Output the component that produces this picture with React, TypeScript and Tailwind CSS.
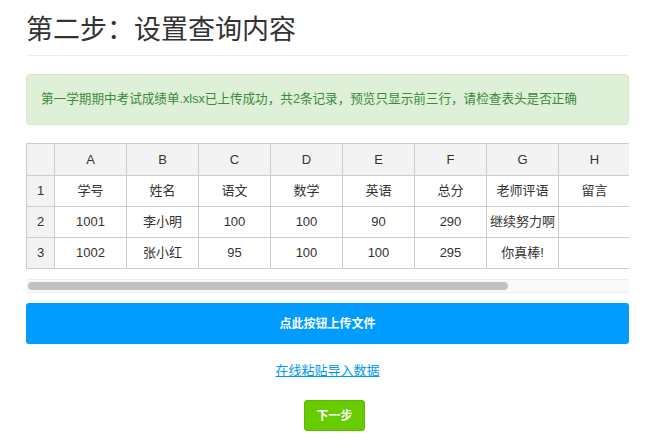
const cols = ['A', 'B', 'C', 'D', 'E', 'F', 'G', 'H']

const rows = [
  ['学号', '姓名', '语文', '数学', '英语', '总分', '老师评语', '留言'],
  ['1001', '李小明', '100', '100', '90', '290', '继续努力啊', ''],
  ['1002', '张小红', '95', '100', '100', '295', '你真棒!', ''],
]

export default function App() {
  return (
    <div
      className="min-h-screen bg-white text-[#333]"
      style={{ fontFamily: '"Liberation Sans", "Noto Sans CJK SC", sans-serif' }}
    >
      <div className="ml-[26px] w-[603px] pt-[12px]">
        {/* Heading */}
        <h1 className="text-[27px] leading-[36px] font-normal pb-[7px] border-b border-[#eee]">
          第二步：设置查询内容
        </h1>

        {/* Success notice */}
        <div className="mt-[18px] h-[51px] flex items-center px-[14px] rounded-[4px] bg-[#dff0d8] border border-[#d6e9c6] text-[#3a8a3a] text-[12.6px]">
          第一学期期中考试成绩单.xlsx已上传成功，共2条记录，预览只显示前三行，请检查表头是否正确
        </div>

        {/* Preview table */}
        <div className="mt-[18px] overflow-hidden">
          <table className="border-collapse text-[13px] text-[#333] table-fixed">
            <thead>
              <tr className="h-[32px]">
                <th className="w-[28px] min-w-[28px] border border-[#ccc] bg-[#f3f3f3]" />
                {cols.map((c) => (
                  <th
                    key={c}
                    className="w-[72px] min-w-[72px] border border-[#ccc] bg-[#f3f3f3] font-normal text-center"
                  >
                    {c}
                  </th>
                ))}
              </tr>
            </thead>
            <tbody>
              {rows.map((r, i) => (
                <tr key={i} className="h-[31px]">
                  <td className="border border-[#ccc] bg-[#f3f3f3] text-center">{i + 1}</td>
                  {r.map((cell, j) => (
                    <td key={j} className="border border-[#ccc] text-center whitespace-nowrap">
                      {cell}
                    </td>
                  ))}
                </tr>
              ))}
            </tbody>
          </table>
        </div>

        {/* Fake horizontal scrollbar */}
        <div className="mt-[10px] h-[14px] bg-[#f9f9f9] border-y border-[#eee] flex items-center px-[2px]">
          <div className="h-[8px] w-[480px] rounded-full bg-[#c1c1c1]" />
        </div>

        {/* Upload button */}
        <button className="mt-[10px] w-full h-[41px] rounded-[3px] bg-[#009cff] text-white text-[12px] font-bold">
          点此按钮上传文件
        </button>

        <div className="mt-[14px] text-center">
          <a href="#" className="text-[13px] text-[#0099ee] underline">
            在线粘贴导入数据
          </a>
        </div>

        <div className="mt-[18px] flex justify-center">
          <button className="ml-[14px] w-[61px] h-[31px] rounded-[3px] bg-[#66cc00] border border-[#5cb800] text-white text-[12px] font-bold">
            下一步
          </button>
        </div>
      </div>
    </div>
  )
}
